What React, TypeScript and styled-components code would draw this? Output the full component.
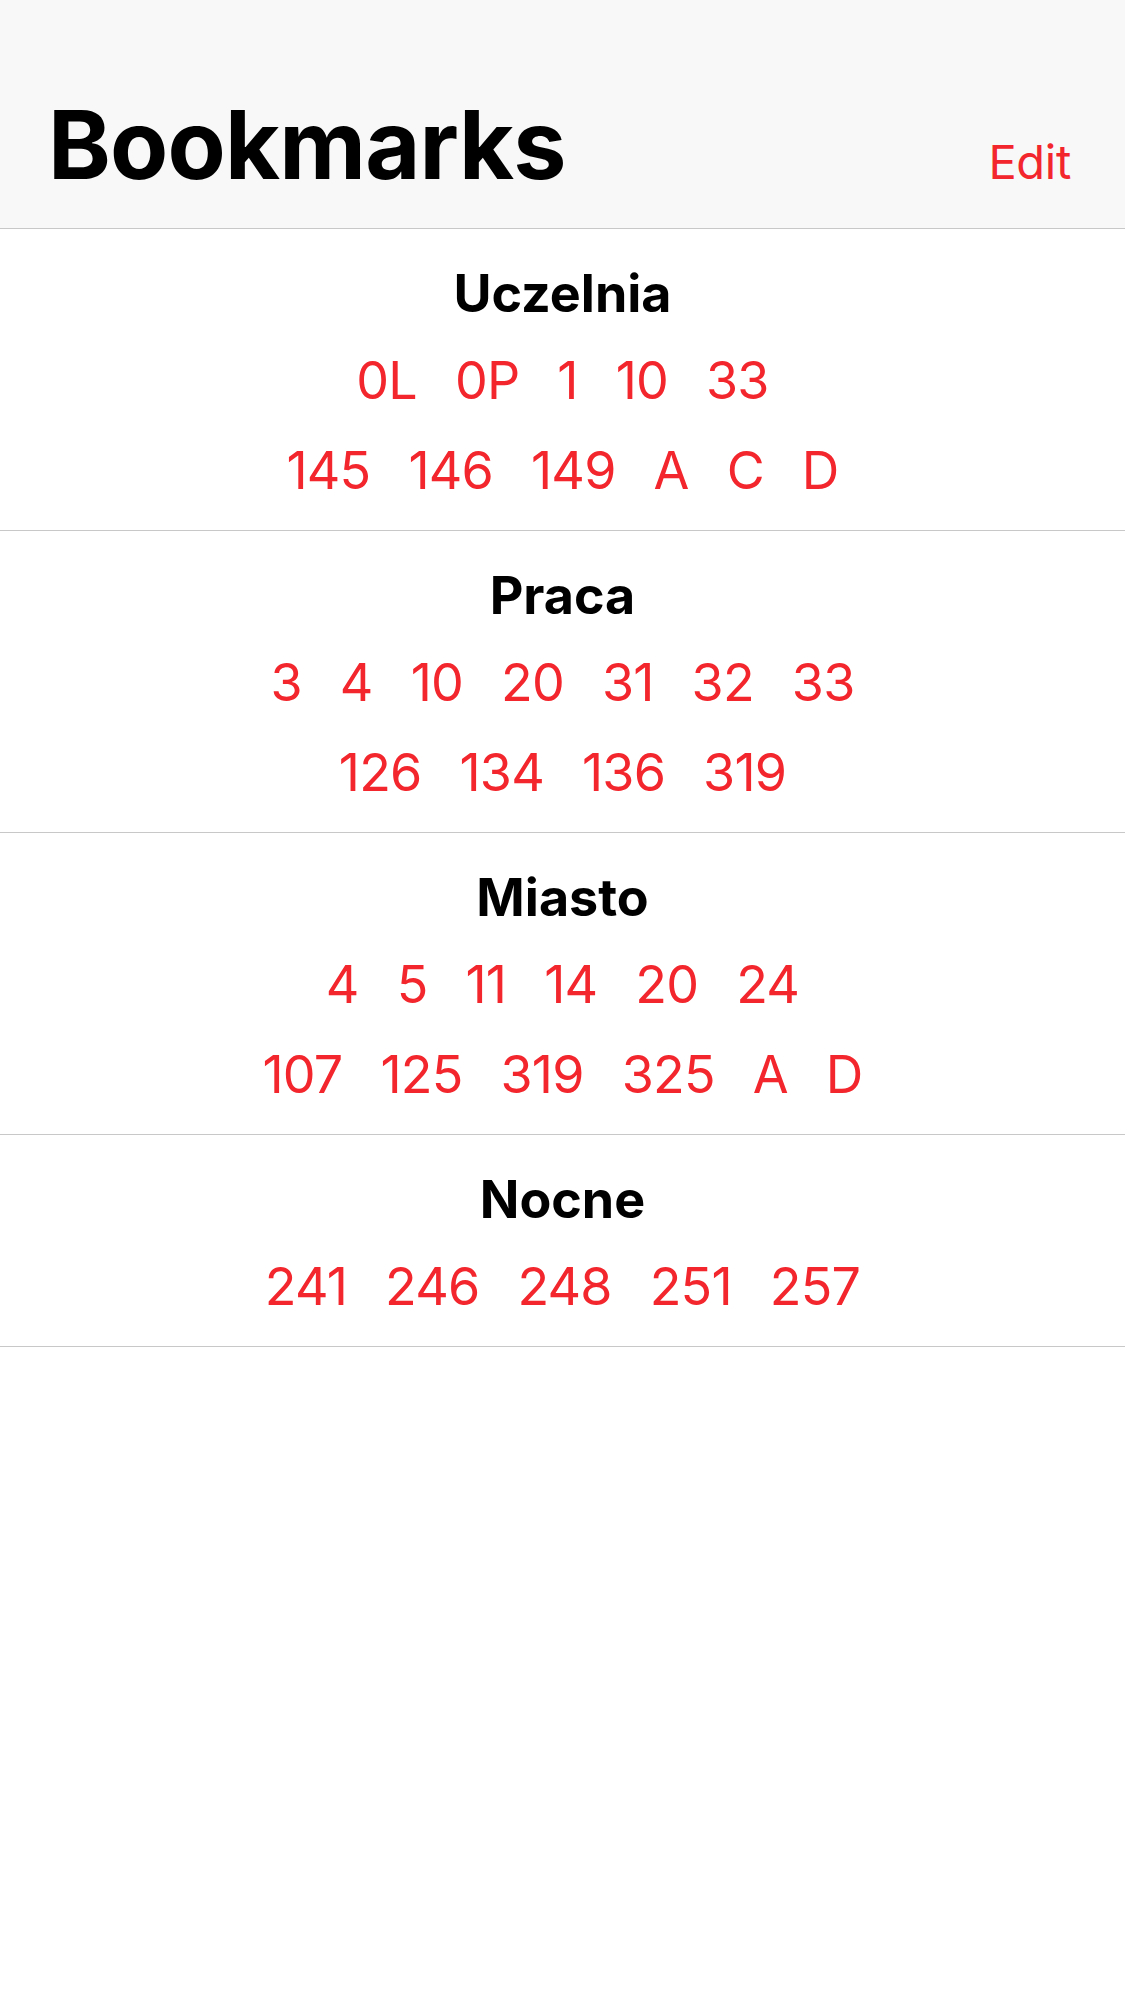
import React from 'react';
import styled, { createGlobalStyle } from 'styled-components';

const GlobalStyle = createGlobalStyle`
    html, body {
        margin: 0;
        padding: 0;
        background: #ffffff;
    }

    body {
        font-family: Inter, "Noto Sans", "Liberation Sans", sans-serif;
        -webkit-font-smoothing: antialiased;
    }
`;

const Page = styled.div`
    width: 1125px;
    min-height: 2001px;
    background: #ffffff;
`;

const NavBar = styled.header`
    box-sizing: border-box;
    height: 229px;
    padding: 88px 54px 0 48px;
    display: flex;
    align-items: baseline;
    justify-content: space-between;
    background: #f8f8f8;
    border-bottom: 1px solid #c8c8c8;
`;

const LargeTitle = styled.h1`
    margin: 0;
    font-size: 95px;
    line-height: 114px;
    font-weight: 700;
    letter-spacing: -0.8px;
    color: #000000;
`;

const EditButton = styled.button`
    border: none;
    background: none;
    padding: 0;
    font-family: inherit;
    font-size: 47px;
    font-weight: 400;
    letter-spacing: -0.3px;
    color: #f2262c;
    cursor: pointer;
`;

const Section = styled.section`
    padding: 35px 0 14px;
    border-bottom: 1px solid #c8c8c8;
`;

const SectionTitle = styled.h2`
    margin: 0 0 12px;
    text-align: center;
    font-size: 52px;
    line-height: 60px;
    font-weight: 700;
    color: #000000;
`;

const Row = styled.div`
    height: 90px;
    display: flex;
    justify-content: center;
    align-items: center;
    gap: 38px;
`;

const Line = styled.button`
    border: none;
    background: none;
    padding: 0;
    font-family: inherit;
    font-size: 52px;
    line-height: 90px;
    font-weight: 400;
    letter-spacing: -0.8px;
    color: #f2262c;
    cursor: pointer;
`;

type Group = {
    name: string;
    rows: string[][];
};

const groups: Group[] = [
    {
        name: 'Uczelnia',
        rows: [
            ['0L', '0P', '1', '10', '33'],
            ['145', '146', '149', 'A', 'C', 'D'],
        ],
    },
    {
        name: 'Praca',
        rows: [
            ['3', '4', '10', '20', '31', '32', '33'],
            ['126', '134', '136', '319'],
        ],
    },
    {
        name: 'Miasto',
        rows: [
            ['4', '5', '11', '14', '20', '24'],
            ['107', '125', '319', '325', 'A', 'D'],
        ],
    },
    {
        name: 'Nocne',
        rows: [['241', '246', '248', '251', '257']],
    },
];

const App: React.FC = () => {
    return (
        <Page>
            <GlobalStyle />
            <NavBar>
                <LargeTitle>Bookmarks</LargeTitle>
                <EditButton>Edit</EditButton>
            </NavBar>

            {groups.map(group => (
                <Section key={group.name}>
                    <SectionTitle>{group.name}</SectionTitle>
                    {group.rows.map((row, i) => (
                        <Row key={i}>
                            {row.map(line => (
                                <Line key={line}>{line}</Line>
                            ))}
                        </Row>
                    ))}
                </Section>
            ))}
        </Page>
    );
};

export default App;
